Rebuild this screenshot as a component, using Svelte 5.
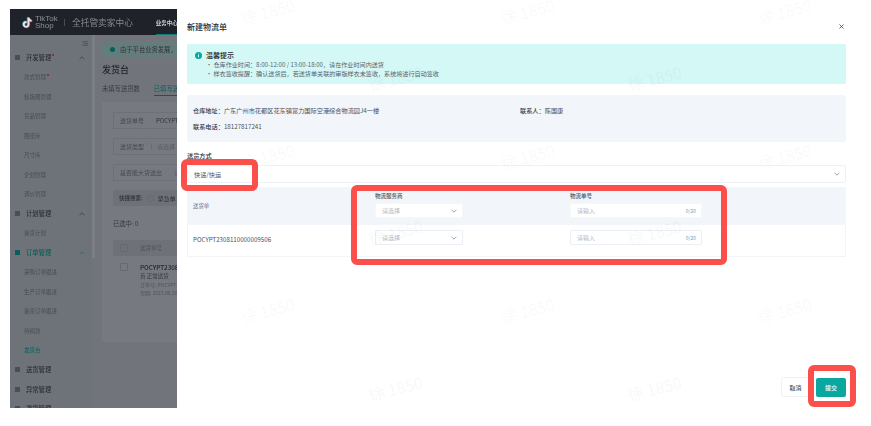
<script>
  const menu = [
    { label: "开发管理", group: true, dot: true, open: true },
    { label: "款式管理", dot: true },
    { label: "核版图管理" },
    { label: "货品管理" },
    { label: "图纸库" },
    { label: "尺寸库" },
    { label: "企划管理" },
    { label: "调价管理" },
    { label: "计划管理", group: true, open: true },
    { label: "备货计划" },
    { label: "订单管理", group: true, open: true, active: true },
    { label: "采购订单跟进" },
    { label: "生产订单跟进" },
    { label: "备货订单跟进" },
    { label: "待揭款" },
    { label: "发货台", current: true },
    { label: "送货管理", group: true },
    { label: "异常管理", group: true },
    { label: "退货管理", group: true }
  ];

  const filters = [
    { label: "送货单号", value: "POCYPT2308110000" },
    { label: "送货类型", value: "请选择", muted: true },
    { label: "是否能大货送出", value: "请选择", muted: true }
  ];

  const marks = [
    [240, 1], [500, 1], [757, 1],
    [110, 68], [368, 68], [627, 68],
    [240, 146], [500, 146], [757, 146],
    [110, 222], [368, 222], [627, 222],
    [240, 300], [500, 300], [757, 300],
    [110, 378], [368, 378], [627, 378]
  ];

  const note = "M13 2h4c.3 2.6 1.8 4.2 4.4 4.4v3.9c-1.6 0-3-.4-4.4-1.3v6.7c0 4.3-3 7-6.800 7-3.900 0-6.700-3-6.700-6.700 0-4.100 3.400-7.200 7.800-6.700v4c-2-.4-3.800.8-3.800 2.700 0 1.600 1.200 2.800 2.800 2.800 1.600 0 2.700-1.100 2.700-3z";
</script>

<div class="app">
  <div class="page">
    <header class="topbar">
      <svg class="logo" viewBox="0 0 24 24" width="12" height="13">
        <path d={note} fill="#1a7f86" transform="translate(-1.500 -1)" />
        <path d={note} fill="#a52a3f" transform="translate(1.500 1)" />
        <path d={note} fill="#e6e7e8" />
      </svg>
      <div class="brand"><span>TikTok</span><span>Shop</span></div>
      <i class="sep"></i>
      <span class="center">全托管卖家中心</span>
      <span class="nav">业务中心</span>
    </header>
    <div class="below">
      <nav class="side">
        <div class="fold">
          <svg viewBox="0 0 10 8" width="6" height="5"><path d="M0 1h10M3 4h7M0 7h10" stroke="#3e4248" stroke-width="1" /></svg>
        </div>
        {#each menu as m}
          <div class="item" class:group={m.group} class:active={m.active} class:current={m.current}>
            {#if m.group}<i class="gicon"></i>{/if}
            <span>{m.label}</span>
            {#if m.dot}<i class="dot"></i>{/if}
            {#if m.open}
              <svg class="up" viewBox="0 0 10 6" width="6" height="4"><path d="M1 5l4-4 4 4" fill="none" stroke="currentColor" stroke-width="1" /></svg>
            {/if}
          </div>
        {/each}
      </nav>
      <i class="rail"></i>
      <main class="content">
        <div class="notice"><i class="ndot"></i>由于平台业务发展，请知悉</div>
        <h1>发货台</h1>
        <div class="tabs"><span>未填写送货数</span><span class="on">已填写送货数</span></div>
        <section class="card">
          {#each filters as f}
            <div class="filter"><span>{f.label}</span><i></i><b class:muted={f.muted}>{f.value}</b></div>
          {/each}
          <div class="quick"><b>快捷搜索:</b><i></i><span>紧急单</span></div>
          <div class="picked">已选中: 0</div>
          <div class="thead"><i class="check"></i><span>送货单号</span></div>
          <div class="order">
            <i class="check"></i>
            <div>
              <strong>POCYPT2308110000</strong>
              <p class="tags">首 正常送货</p>
              <p>订单号: POCYPT2308</p>
              <p>货期: 2023.08.20</p>
            </div>
          </div>
        </section>
      </main>
    </div>
  </div>

  <aside class="drawer">
    <header class="head">
      <h2>新建物流单</h2>
      <svg viewBox="0 0 10 10" width="5" height="5"><path d="M1 1l8 8M9 1l-8 8" stroke="#333a45" stroke-width="1.6" /></svg>
    </header>

    <div class="alert">
      <svg class="info" viewBox="0 0 16 16" width="7" height="7">
        <circle cx="8" cy="8" r="8" fill="#0aa6a0" />
        <path d="M8 7v5M8 3.5v2" stroke="#fff" stroke-width="2" />
      </svg>
      <div>
        <strong>温馨提示</strong>
        <p>· 仓库作业时间：8:00-12:00 / 13:00-18:00，请在作业时间内送货</p>
        <p>· 样衣签收提醒：确认送货后，若送货单关联的审版样衣未签收，系统将进行自动签收</p>
      </div>
    </div>

    <div class="address">
      <div class="addr-row">
        <span class="addr-main"><b>仓库地址：</b>广东广州市花都区花东镇富力国际空港综合物流园J4一楼</span>
        <span><b>联系人：</b>陈国康</span>
      </div>
      <div><b>联系电话：</b>18127817241</div>
    </div>

    <div class="method-label">送货方式</div>
    <div class="method">
      <span>快递/快运</span>
      <svg viewBox="0 0 10 6" width="6" height="4"><path d="M1 1l4 4 4-4" fill="none" stroke="#5c6470" stroke-width="1" /></svg>
    </div>

    <div class="table">
      <div class="row thead-row">
        <div class="cell first">送货单</div>
        <div class="cell">
          <div class="label">物流服务商</div>
          <div class="select plain"><span>请选择</span>
            <svg viewBox="0 0 10 6" width="6" height="4"><path d="M1 1l4 4 4-4" fill="none" stroke="#5c6470" stroke-width="1" /></svg>
          </div>
        </div>
        <div class="cell">
          <div class="label">物流单号</div>
          <div class="select plain wide"><span>请输入</span><em>0/20</em></div>
        </div>
      </div>
      <div class="row body-row">
        <div class="cell first code">POCYPT2308110000009506</div>
        <div class="cell">
          <div class="select"><span>请选择</span>
            <svg viewBox="0 0 10 6" width="6" height="4"><path d="M1 1l4 4 4-4" fill="none" stroke="#5c6470" stroke-width="1" /></svg>
          </div>
        </div>
        <div class="cell">
          <div class="select wide"><span>请输入</span><em>0/20</em></div>
        </div>
      </div>
    </div>

    <footer class="foot">
      <button class="cancel">取消</button>
      <button class="submit">提交</button>
    </footer>
  </aside>

  {#each marks as [x, y]}
    <span class="mark" style="left:{x}px;top:{y}px">徐 1850</span>
  {/each}

  <i class="hl hl-method"></i>
  <i class="hl hl-fields"></i>
  <i class="hl hl-submit"></i>
</div>

<style>
  :global(body) {
    margin: 0;
    background: #fff;
  }
  .app {
    position: relative;
    display: flex;
    width: 871px;
    height: 426px;
    overflow: hidden;
    font-family: "Noto Sans CJK SC", "Noto Sans", sans-serif;
    font-size: 6px;
    color: #4a515d;
    filter: blur(0.3px);
  }
  .page {
    width: 167px;
    height: 399px;
    margin: 9px 0 0 10px;
    overflow: hidden;
    flex: none;
    display: flex;
    flex-direction: column;
    background: #71757b;
    filter: blur(0.35px);
  }
  .topbar {
    height: 26px;
    flex: none;
    display: flex;
    align-items: center;
    padding-left: 11px;
    background: #1f2329;
    white-space: nowrap;
  }
  .logo {
    flex: none;
    margin-right: 2px;
  }
  .brand {
    display: flex;
    flex-direction: column;
    flex: none;
    width: 22px;
    font: 8px/7px "Liberation Sans", sans-serif;
    color: #8d9095;
  }
  .sep {
    width: 1px;
    height: 7px;
    flex: none;
    background: #4a4d52;
    margin: 0 7px;
  }
  .center {
    font-size: 8.7px;
    color: #85888d;
  }
  .nav {
    margin-left: 23px;
    padding: 9px 0 7px;
    border-bottom: 1px solid #0f7f7a;
    font-size: 5.5px;
    font-weight: 700;
    color: #c9cbcd;
  }
  .below {
    flex: 1;
    display: flex;
    min-height: 0;
  }
  .side {
    width: 82px;
    flex: none;
    background: #6e7379;
    padding-top: 4px;
  }
  .fold {
    height: 9px;
    display: flex;
    align-items: center;
    justify-content: flex-end;
    padding-right: 4px;
  }
  .item {
    position: relative;
    display: flex;
    align-items: center;
    height: 19.5px;
    padding-left: 14px;
    font-size: 5.5px;
    color: #484d54;
    white-space: nowrap;
  }
  .item.group {
    padding-left: 5px;
    font-size: 6.3px;
    font-weight: 500;
    color: #2a2e34;
  }
  .item.active,
  .item.current {
    color: #075f5b;
  }
  .gicon {
    width: 5px;
    height: 5px;
    margin-right: 6px;
    background: #494e55;
  }
  .active .gicon {
    background: #075f5b;
  }
  .dot {
    width: 2px;
    height: 2px;
    margin: -5px 0 0 1px;
    border-radius: 50%;
    background: #8e1f28;
  }
  .up {
    position: absolute;
    right: 7px;
    top: 8px;
  }
  .rail {
    width: 3px;
    flex: none;
    height: 223px;
    background: #7b7f85;
  }
  .content {
    flex: 1;
    min-width: 0;
    padding: 6px 0 0 7px;
    white-space: nowrap;
    overflow: hidden;
  }
  .notice {
    display: flex;
    align-items: center;
    gap: 5px;
    height: 17px;
    padding-left: 8px;
    font-size: 6.3px;
    background: #657c7c;
    color: #2f3438;
  }
  .ndot {
    width: 5px;
    height: 5px;
    flex: none;
    border-radius: 50%;
    background: #065f5b;
  }
  h1 {
    margin: 5px 0 0;
    font-size: 9px;
    font-weight: 500;
    line-height: 13px;
    color: #1f2328;
  }
  .tabs {
    display: flex;
    gap: 14px;
    margin-top: 8px;
    font-size: 6.3px;
    line-height: 9px;
    color: #34383e;
  }
  .tabs .on {
    color: #075f5b;
    padding-bottom: 2px;
    border-bottom: 1px solid #075f5b;
  }
  .card {
    height: 230px;
    margin-top: 6px;
    padding: 10px 0 0 11px;
    background: #767a80;
  }
  .filter {
    display: flex;
    align-items: center;
    height: 15px;
    margin-bottom: 9px;
    padding-left: 6px;
    border: 1px solid #6d7177;
    border-right: 0;
    font-size: 6px;
    color: #44494f;
  }
  .filter i {
    width: 1px;
    height: 7px;
    margin: 0 5px 0 7px;
    background: #6a6e74;
  }
  .filter b {
    font-weight: 400;
    color: #2c3035;
  }
  .filter b.muted {
    color: #5a5e64;
  }
  .quick {
    display: flex;
    align-items: center;
    gap: 4px;
    height: 16px;
    padding-left: 6px;
    background: #6e7278;
    color: #2c3035;
  }
  .quick b {
    font-size: 5.5px;
    font-weight: 500;
  }
  .quick i {
    width: 5px;
    height: 5px;
    border: 1px solid #666a70;
    border-radius: 50%;
  }
  .picked {
    margin-top: 13px;
    font-size: 6.3px;
    line-height: 10px;
    color: #363a40;
  }
  .thead {
    display: flex;
    align-items: center;
    gap: 12px;
    height: 16px;
    margin-top: 11px;
    padding-left: 7px;
    background: #6e7278;
    font-size: 5.5px;
  }
  .check {
    width: 6px;
    height: 6px;
    flex: none;
    border: 1px solid #666a70;
    border-radius: 1px;
  }
  .order {
    display: flex;
    gap: 12px;
    padding: 7px 0 0 7px;
    height: 60px;
    font-size: 5px;
    color: #50555b;
  }
  .order strong {
    font-size: 6.3px;
    font-weight: 500;
    color: #1f2328;
  }
  .order p {
    margin: 1px 0 0;
    line-height: 7px;
  }
  .order .tags {
    font-size: 5.5px;
    color: #34383e;
  }

  .drawer {
    flex: 1;
    min-width: 0;
    display: flex;
    flex-direction: column;
    padding: 8px 25px 29px 10px;
    background: #fff;
  }
  .head {
    display: flex;
    align-items: center;
    justify-content: space-between;
    height: 36px;
    padding-right: 2px;
  }
  h2 {
    margin: 0;
    font-size: 8px;
    font-weight: 500;
    color: #23272e;
  }
  .alert {
    display: flex;
    gap: 4px;
    height: 40px;
    box-sizing: border-box;
    padding: 7px 8px;
    background: #d4f8f5;
    border-radius: 1px;
  }
  .info {
    flex: none;
    margin-top: 1px;
  }
  .alert strong {
    display: block;
    font-size: 7px;
    font-weight: 500;
    line-height: 9px;
    color: #23272e;
  }
  .alert p {
    margin: 1px 0 0;
    font-size: 6.1px;
    line-height: 8px;
    color: #5a6270;
  }
  .address {
    height: 47px;
    box-sizing: border-box;
    margin-top: 11px;
    padding: 11px 6px;
    background: #f2f5fa;
    border-radius: 3px;
    font-size: 6.2px;
    line-height: 9px;
    display: flex;
    flex-direction: column;
    gap: 7px;
  }
  .addr-row {
    display: flex;
  }
  .addr-main {
    width: 327px;
  }
  .address b {
    font-weight: 500;
    color: #343a44;
  }
  .method-label {
    margin-top: 9px;
    height: 14px;
    font-size: 6.2px;
    font-weight: 500;
    line-height: 9px;
    color: #23272e;
  }
  .method {
    display: flex;
    align-items: center;
    justify-content: space-between;
    height: 16px;
    padding: 0 5px 0 6px;
    border: 1px solid #eff1f7;
    border-radius: 2px;
    font-size: 6.2px;
  }
  .table {
    margin-top: 4px;
    border: 1px solid #f2f4f8;
    border-top: 0;
  }
  .row {
    display: grid;
    grid-template-columns: 187px 195px 1fr;
  }
  .thead-row {
    height: 38px;
    margin: 0 -1px;
    padding-left: 1px;
    background: #f2f5fa;
    font-size: 5.4px;
    color: #6a717d;
  }
  .body-row {
    height: 31px;
    padding-top: 5px;
    box-sizing: border-box;
  }
  .first {
    padding-left: 5px;
  }
  .thead-row .first {
    align-self: center;
  }
  .code {
    padding-top: 5px;
    font-size: 6.2px;
    line-height: 10px;
  }
  .label {
    margin-top: 5px;
    font-size: 5.5px;
    font-weight: 500;
    line-height: 8px;
    color: #4d5562;
  }
  .select {
    display: flex;
    align-items: center;
    justify-content: space-between;
    box-sizing: border-box;
    width: 88px;
    height: 15px;
    padding: 0 5px 0 6px;
    border: 1px solid #eceff6;
    border-radius: 1px;
    background: #fff;
    font-size: 6px;
    color: #b4b9c2;
  }
  .select.wide {
    width: 132px;
  }
  .select.plain {
    border-color: #f6f7fb;
    margin-top: 3px;
  }
  .select em {
    font-style: normal;
    font-size: 5px;
    color: #8d93a0;
  }
  .foot {
    margin-top: auto;
    display: flex;
    justify-content: flex-end;
    align-items: flex-end;
    gap: 6px;
  }
  button {
    padding: 0;
    font-family: inherit;
    font-size: 6px;
    font-weight: 500;
    border-radius: 2px;
  }
  .cancel {
    width: 29px;
    height: 20px;
    background: #fff;
    border: 1px solid #f1f2f7;
    color: #4a515d;
  }
  .submit {
    width: 30px;
    height: 19px;
    background: #0aa6a0;
    border: 0;
    color: #fff;
  }

  .mark {
    position: absolute;
    font-size: 16px;
    line-height: 20px;
    white-space: nowrap;
    color: rgba(120, 128, 145, 0.06);
    transform: rotate(-14deg);
    pointer-events: none;
  }
  .hl {
    position: absolute;
    box-sizing: border-box;
    border: 6px solid #fa4f4b;
    border-radius: 6px;
  }
  .hl-method {
    left: 181px;
    top: 159px;
    width: 77px;
    height: 32px;
  }
  .hl-fields {
    left: 351px;
    top: 185px;
    width: 376px;
    height: 80px;
  }
  .hl-submit {
    left: 808px;
    top: 365px;
    width: 48px;
    height: 42px;
  }
</style>
